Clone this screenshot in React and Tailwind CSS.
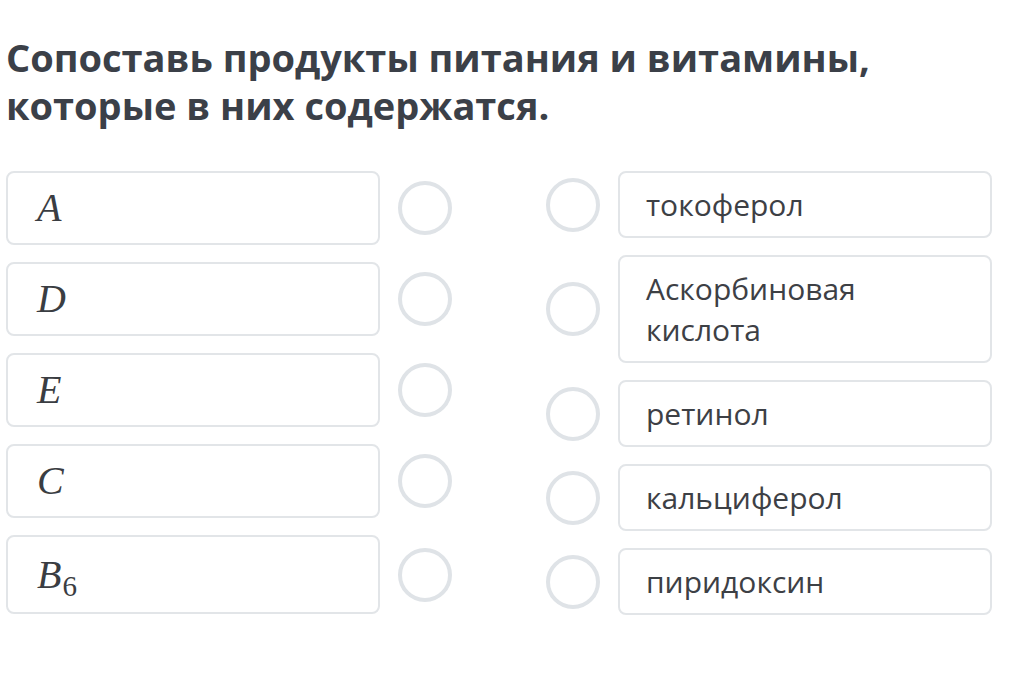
import React from 'react';

const leftItems = [
  { letter: 'A' },
  { letter: 'D' },
  { letter: 'E' },
  { letter: 'C' },
  { letter: 'B', sub: '6' },
];

const rightItems = ['токоферол', 'Аскорбиновая кислота', 'ретинол', 'кальциферол', 'пиридоксин'];

const Ring = () => (
  <div className="w-[54px] h-[54px] shrink-0 rounded-full border-[4px] border-[#dfe3e7] bg-white" />
);

const App = () => {
  return (
    <div className="min-h-screen bg-white pl-[6px] pt-[33px]" style={{ fontFamily: '"Open Sans", "Noto Sans", sans-serif' }}>
      <h1 className="text-[38px] leading-[48px] font-bold text-[#3b4048]">
        Сопоставь продукты питания и витамины,
        <br />
        которые в них содержатся.
      </h1>

      <div className="mt-[42px] flex justify-between w-[986px]">
        <div className="flex flex-col gap-[17px]">
          {leftItems.map((item, i) => (
            <div key={i} className="flex items-center gap-[18px]">
              <div
                className={`w-[374px] ${item.sub ? 'h-[79px]' : 'h-[74px]'} rounded-[8px] border-2 border-[#e2e5e8] bg-white flex items-center pl-[29px] text-[#3a3d42]`}
                style={{ fontFamily: '"Liberation Serif", "Times New Roman", serif' }}
              >
                <span className="italic text-[40px] leading-none">
                  {item.letter}
                  {item.sub && <span className="not-italic text-[29px] relative top-[8px] ml-[1px]">{item.sub}</span>}
                </span>
              </div>
              <Ring />
            </div>
          ))}
        </div>

        <div className="flex flex-col gap-[17px]">
          {rightItems.map((text, i) => (
            <div key={i} className="flex items-center gap-[18px]">
              <Ring />
              <div className="w-[374px] rounded-[8px] border-2 border-[#e2e5e8] bg-white px-[26px] py-[11px] text-[30px] leading-[41px] text-[#3d4045]">
                {text}
              </div>
            </div>
          ))}
        </div>
      </div>
    </div>
  );
};

export default App;
